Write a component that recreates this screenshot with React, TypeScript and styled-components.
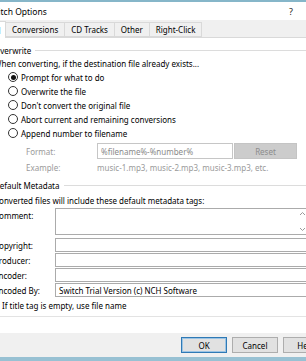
import React from 'react';
import styled, { createGlobalStyle } from 'styled-components';

const GlobalStyle = createGlobalStyle`
  html, body {
    margin: 0;
    padding: 0;
    overflow: hidden;
    background: #ffffff;
  }
  body {
    font-family: 'Noto Sans', 'Open Sans', sans-serif;
    font-size: 8px;
    color: #000000;
  }
`;

const options = [
  'Prompt for what to do',
  'Overwrite the file',
  "Don't convert the original file",
  'Abort current and remaining conversions',
  'Append number to filename',
];

const tabs = ['General', 'Conversions', 'CD Tracks', 'Other', 'Right-Click'];

const fields = [
  { label: 'Copyright:', value: '' },
  { label: 'Producer:', value: '' },
  { label: 'Encoder:', value: '' },
  { label: 'Encoded By:', value: 'Switch Trial Version (c) NCH Software' },
];

export default function App() {
  return (
    <>
      <GlobalStyle />
      <Dialog>
        <TitleBar>
          <Title>Switch Options</Title>
          <TitleButton>?</TitleButton>
          <TitleButton>✕</TitleButton>
        </TitleBar>

        <TabStrip>
          {tabs.map((t, i) => (
            <Tab key={t} $active={i === 0}>
              {t}
            </Tab>
          ))}
        </TabStrip>

        <Page>
          <GroupHeader $top={1}>
            <span>Overwrite</span>
            <Rule />
          </GroupHeader>
          <Line>When converting, if the destination file already exists...</Line>
          {options.map((o, i) => (
            <RadioRow key={o}>
              <Radio $checked={i === 0} />
              {o}
            </RadioRow>
          ))}
          <FormatRow>
            <DimLabel>Format:</DimLabel>
            <FormatInput>%filename%-%number%</FormatInput>
            <ResetButton>Reset</ResetButton>
          </FormatRow>
          <ExampleRow>
            <DimLabel>Example:</DimLabel>
            <DimText>music-1.mp3, music-2.mp3, music-3.mp3, etc.</DimText>
          </ExampleRow>

          <GroupHeader $top={4}>
            <span>Default Metadata</span>
            <Rule />
          </GroupHeader>
          <Line $top={4}>Converted files will include these default metadata tags:</Line>
          <FieldRow $top={1}>
            <FieldLabel>Comment:</FieldLabel>
            <TextArea>
              <ScrollArrows>
                <svg width="7" height="5" viewBox="0 0 7 5">
                  <path d="M1 4 L3.5 1.5 L6 4" fill="none" stroke="#9a9a9a" strokeWidth="1" />
                </svg>
                <svg width="7" height="5" viewBox="0 0 7 5">
                  <path d="M1 1 L3.5 3.5 L6 1" fill="none" stroke="#9a9a9a" strokeWidth="1" />
                </svg>
              </ScrollArrows>
            </TextArea>
          </FieldRow>
          {fields.map((f, i) => (
            <FieldRow key={f.label} $top={i === 0 ? 3 : 1}>
              <FieldLabel $center>{f.label}</FieldLabel>
              <TextInput>{f.value}</TextInput>
            </FieldRow>
          ))}
          <CheckRow>
            <CheckBox />
            If title tag is empty, use file name
          </CheckRow>
        </Page>

        <Gap />

        <Footer>
          <DialogButton $default>OK</DialogButton>
          <DialogButton>Cancel</DialogButton>
          <DialogButton>Help</DialogButton>
        </Footer>
      </Dialog>
    </>
  );
}

const Dialog = styled.div`
  width: 376px;
  height: 361px;
  margin-left: -40px;
  display: flex;
  flex-direction: column;
  background: #ffffff;
  border-bottom: 4px solid #98c1d3;
  box-sizing: border-box;
`;

const TitleBar = styled.div`
  height: 20px;
  border-top: 2px solid #86b6c9;
  box-sizing: border-box;
  display: flex;
  align-items: center;
  padding-left: 27px;
  background: #ffffff;
`;

const Title = styled.div`
  flex: 1;
  font-size: 8.5px;
`;

const TitleButton = styled.div`
  width: 30px;
  text-align: center;
  font-size: 9px;
  color: #222222;
`;

const TabStrip = styled.div`
  height: 18px;
  display: flex;
  align-items: flex-end;
  padding-left: 4px;
  background: #f0f0f0;
  border-bottom: 1px solid #d9d9d9;
  box-sizing: border-box;
`;

const Tab = styled.div<{ $active?: boolean }>`
  height: ${(p) => (p.$active ? 17 : 15)}px;
  margin-bottom: ${(p) => (p.$active ? -1 : 0)}px;
  padding: 0 6px;
  display: flex;
  align-items: center;
  box-sizing: border-box;
  background: ${(p) => (p.$active ? '#ffffff' : '#f0f0f0')};
  border: 1px solid #d9d9d9;
  border-bottom: ${(p) => (p.$active ? 'none' : '1px solid #d9d9d9')};
  border-left: ${(p) => (p.$active ? '1px solid #d9d9d9' : 'none')};
  width: ${(p) => (p.$active ? '42px' : 'auto')};
`;

const Page = styled.div`
  padding: 5px 0 4px 34px;
  border-bottom: 1px solid #e3e3e3;
  display: flex;
  flex-direction: column;
`;

const GroupHeader = styled.div<{ $top?: number }>`
  display: flex;
  align-items: center;
  gap: 4px;
  height: 12px;
  margin-top: ${(p) => p.$top ?? 0}px;
`;

const Rule = styled.div`
  flex: 1;
  height: 1px;
  background: #dcdcdc;
`;

const Line = styled.div<{ $top?: number }>`
  height: 12px;
  line-height: 12px;
  margin-top: ${(p) => p.$top ?? 2}px;
`;

const RadioRow = styled.div`
  height: 14px;
  display: flex;
  align-items: center;
  gap: 3px;
  padding-left: 14px;
`;

const Radio = styled.span<{ $checked?: boolean }>`
  width: 10px;
  height: 10px;
  border: 1px solid #333333;
  border-radius: 50%;
  box-sizing: border-box;
  display: inline-flex;
  align-items: center;
  justify-content: center;
  &::after {
    content: '';
    width: 5px;
    height: 5px;
    border-radius: 50%;
    background: ${(p) => (p.$checked ? '#111111' : 'transparent')};
  }
`;

const FormatRow = styled.div`
  display: flex;
  align-items: center;
  padding-left: 32px;
  margin-top: 3px;
  height: 16px;
`;

const ExampleRow = styled.div`
  display: flex;
  align-items: center;
  padding-left: 32px;
  height: 16px;
`;

const DimLabel = styled.span`
  width: 71px;
  color: #9a9a9a;
`;

const DimText = styled.span`
  color: #9a9a9a;
`;

const FormatInput = styled.div`
  width: 136px;
  height: 16px;
  box-sizing: border-box;
  border: 1px solid #c6c6c6;
  padding-left: 3px;
  display: flex;
  align-items: center;
  color: #8a8a8a;
`;

const ResetButton = styled.div`
  width: 63px;
  height: 16px;
  margin-left: 1px;
  box-sizing: border-box;
  border: 1px solid #c4c4c4;
  background: #cccccc;
  color: #8d8d8d;
  display: flex;
  align-items: center;
  justify-content: center;
`;

const FieldRow = styled.div<{ $top?: number }>`
  display: flex;
  margin-top: ${(p) => p.$top ?? 0}px;
`;

const FieldLabel = styled.span<{ $center?: boolean }>`
  width: 61px;
  display: flex;
  align-items: ${(p) => (p.$center ? 'center' : 'flex-start')};
  padding-top: ${(p) => (p.$center ? 0 : 2)}px;
`;

const TextArea = styled.div`
  width: 253px;
  height: 27px;
  box-sizing: border-box;
  border: 1px solid #ababab;
  display: flex;
  justify-content: flex-end;
`;

const ScrollArrows = styled.div`
  width: 9px;
  display: flex;
  flex-direction: column;
  justify-content: space-between;
  align-items: center;
  padding: 2px 0;
`;

const TextInput = styled.div`
  width: 253px;
  height: 14px;
  box-sizing: border-box;
  border: 1px solid #ababab;
  padding-left: 3px;
  display: flex;
  align-items: center;
`;

const CheckRow = styled.div`
  display: flex;
  align-items: center;
  gap: 3px;
  height: 14px;
  margin-top: 1px;
  margin-left: -4px;
`;

const CheckBox = styled.span`
  width: 9px;
  height: 9px;
  border: 1px solid #333333;
  box-sizing: border-box;
  background: #ffffff;
`;

const Gap = styled.div`
  flex: 1;
`;

const Footer = styled.div`
  height: 24px;
  background: #f0f0f0;
  display: flex;
  align-items: center;
  justify-content: flex-end;
  gap: 5px;
  padding-right: 7px;
`;

const DialogButton = styled.div<{ $default?: boolean }>`
  width: 46px;
  height: 16px;
  box-sizing: border-box;
  background: #e1e1e1;
  border: 1px solid ${(p) => (p.$default ? '#2f79b5' : '#adadad')};
  box-shadow: ${(p) => (p.$default ? 'inset 0 0 0 1px #9cc4e4' : 'none')};
  display: flex;
  align-items: center;
  justify-content: center;
`;
